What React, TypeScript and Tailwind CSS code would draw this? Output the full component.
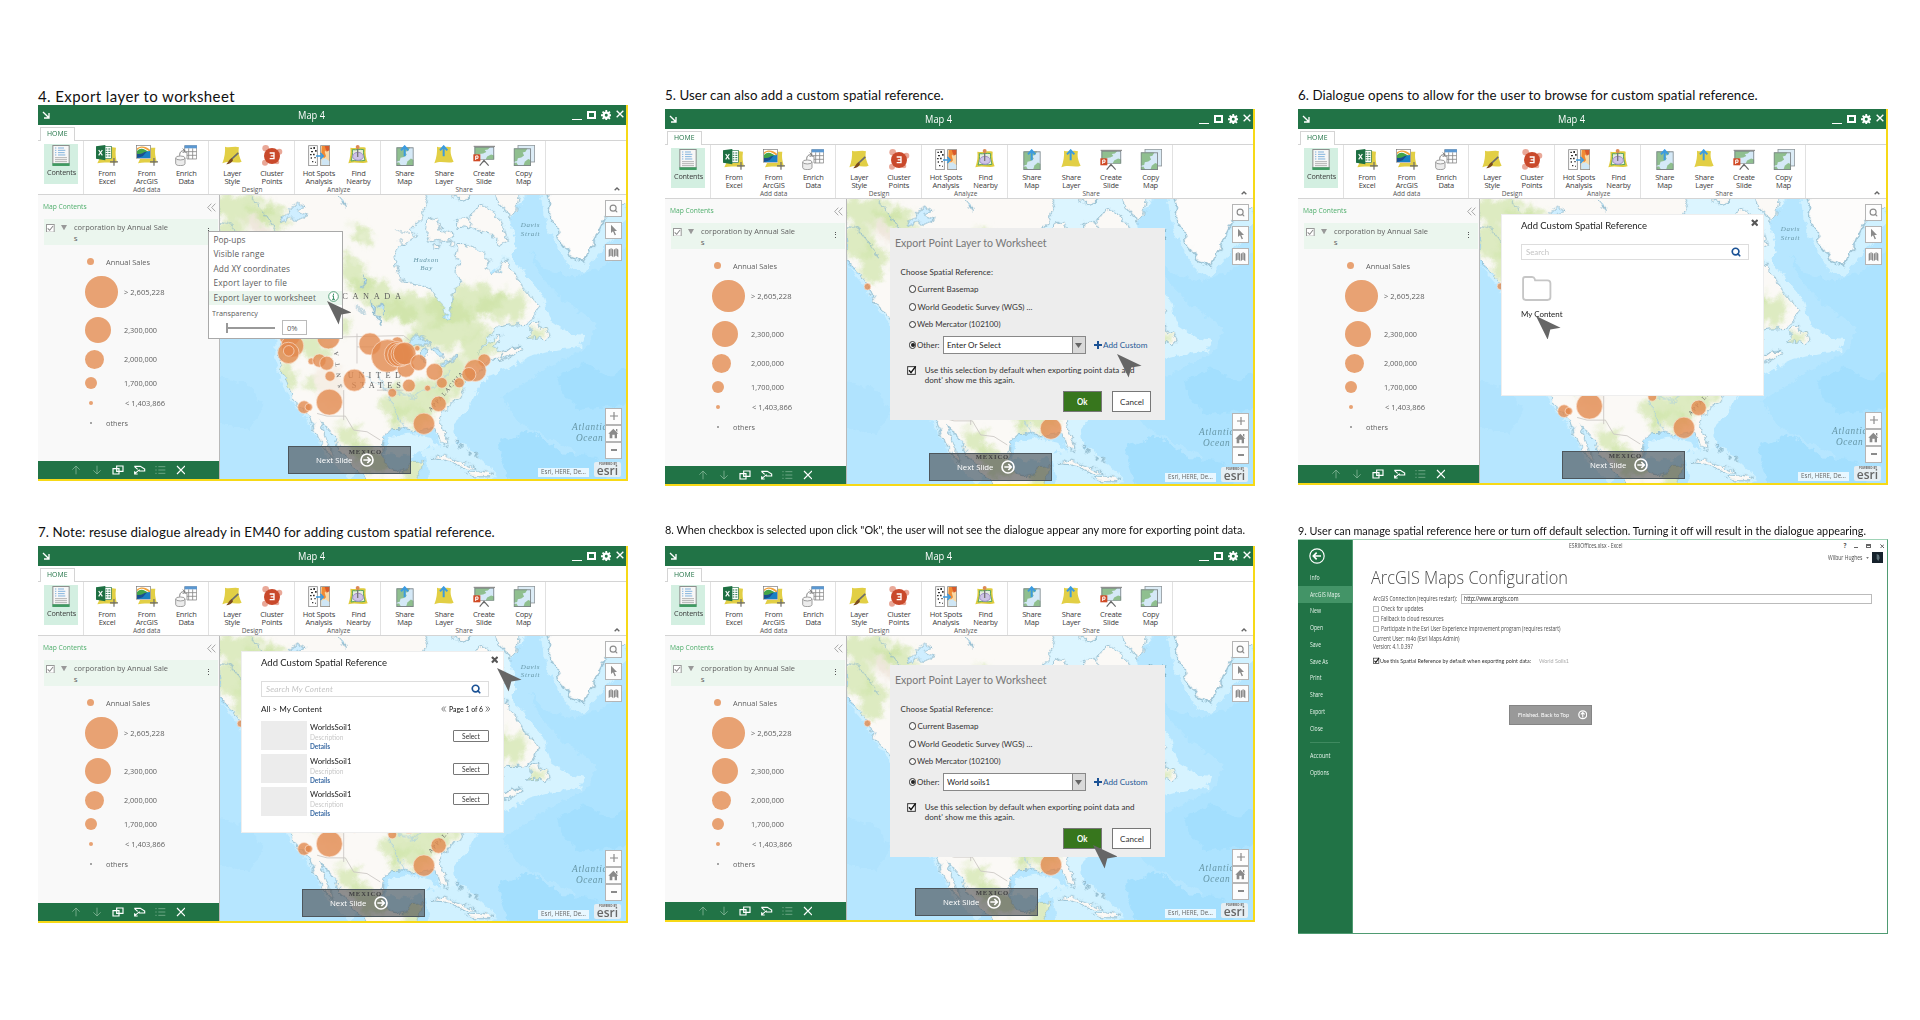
import React, { useLayoutEffect, useRef, useState } from "react";
import { Search } from "lucide-react";

const UI = "font-['Open_Sans','Noto_Sans',sans-serif]";
const HUMAN = "font-['Lato','Open_Sans',sans-serif]";

/* Text that fills a known width: narrowed when it is too long, spaced out when it is too short. */
function T({ w, className = "", children }: { w?: number; className?: string; children: string }) {
  const ref = useRef<HTMLSpanElement>(null);
  const [fit, setFit] = useState<React.CSSProperties>({});
  useLayoutEffect(() => {
    if (!w || !ref.current) return;
    const natural = ref.current.getBoundingClientRect().width;
    if (natural > w) {
      setFit({ transform: `scaleX(${w / natural})`, transformOrigin: "0 50%", marginRight: w - natural });
    } else {
      setFit({ letterSpacing: (w - natural) / children.length });
    }
  }, []);
  return (
    <span ref={ref} className={`inline-block shrink-0 self-auto whitespace-nowrap ${className}`} style={fit}>
      {children}
    </span>
  );
}

/* ---------------------------------------------------------------- icons */

const YELLOW = "M12 5C26 11 40 1 54 7C50 24 57 40 62 50C46 57 24 46 4 55C11 38 13 20 12 5Z";

function Land({ x, y, w, h }: { x: number; y: number; w: number; h: number }) {
  return (
    <svg x={x} y={y} width={w} height={h} viewBox="0 0 50 50" preserveAspectRatio="none">
      <rect width="50" height="50" fill="#d5e9f7" />
      <path d="M0 0H40L34 10L26 12L30 20L22 26L12 28L10 36L0 38Z" fill="#8fbf8f" />
      <path d="M28 50L32 38L42 30L50 34V50Z" fill="#8fbf8f" />
      <path d="M0 42L8 40L14 50H0Z" fill="#8fbf8f" />
      <rect x="1" y="1" width="48" height="48" fill="none" stroke="#7d8487" strokeWidth="3" />
    </svg>
  );
}

function Plus() {
  return <path d="M54 39V62M42 50.500H66" stroke="#6b6b6b" strokeWidth="3.500" fill="none" />;
}

const UpArrow = () => (
  <path d="M32 34V5M21 16L32 4L43 16" stroke="#3b9be0" strokeWidth="6" fill="none" />
);

const ICONS: Record<string, React.ReactNode> = {
  contents: (
    <>
      <rect x="8.500" y="1.500" width="49" height="55" fill="#f7f7f7" stroke="#8b8f8d" strokeWidth="3" />
      <rect x="7" y="55" width="52" height="8" fill="#3f9a62" />
      <path d="M24 9H42M24 16H46M24 23H44M24 30H46M15 9H19M15 16H19M15 23H19M15 30H19" stroke="#6aa6d8" strokeWidth="2.500" />
      <path d="M15 38H51M15 44H51M15 50H51" stroke="#a5a5a5" strokeWidth="2.500" />
    </>
  ),
  excel: (
    <>
      <path d="M44 6L60 8C57 26 60 42 63 52C48 56 26 50 4 55L10 42H44Z" fill="#e2cf45" />
      <rect x="22" y="5" width="24" height="36" fill="#fff" stroke="#217346" strokeWidth="2" />
      <path d="M29 12H34M37 12H43M29 19H34M37 19H43M29 26H34M37 26H43M29 33H34M37 33H43" stroke="#217346" strokeWidth="3" />
      <path d="M0 4L28 0V46L0 41Z" fill="#1d6f42" />
      <path d="M8 15L19 31M19 15L8 31" stroke="#fff" strokeWidth="3.500" />
      <Plus />
    </>
  ),
  arcgis: (
    <>
      <path d="M44 8L58 8C55 26 60 42 63 52C48 56 26 50 6 55L12 42H44Z" fill="#e2cf45" />
      <rect x="1.500" y="1.500" width="42" height="38" fill="#fff" stroke="#777" strokeWidth="2" />
      <path d="M3 16C14 3 26 8 42 22V14C28 2 14 2 3 10Z" fill="#f2a33c" />
      <path d="M3 18C14 6 26 12 42 24V34H3Z" fill="#44a548" />
      <path d="M3 32C18 32 26 18 42 18V39H3Z" fill="#1a7fc4" />
      <path d="M3 26C16 30 22 20 32 20L20 34L3 39Z" fill="#1b4f8f" />
      <Plus />
    </>
  ),
  enrich: (
    <>
      <path d="M29 2H65V42H36V22H29Z" fill="#fff" stroke="#8a8a8a" strokeWidth="2.500" />
      <rect x="29" y="1" width="37" height="9" fill="#5b98d2" />
      <path d="M29 20H65M36 31H65M41 10V42M53 10V42" stroke="#8a8a8a" strokeWidth="2.500" />
      <path d="M2 39V56C2 64 30 64 30 56V39" fill="#ececec" stroke="#8a8a8a" strokeWidth="2.500" />
      <ellipse cx="16" cy="39" rx="14" ry="6" fill="#f6f6f6" stroke="#8a8a8a" strokeWidth="2.500" />
      <path d="M14 32C14 20 19 17 29 17M23 11L30 17L23 24" fill="none" stroke="#777" strokeWidth="3" />
    </>
  ),
  style: (
    <>
      <path d={YELLOW} fill="#e2cf45" />
      <path d="M52 24L30 44" stroke="#6c6c6c" strokeWidth="5" />
      <path d="M33 40L36 46C32 54 24 58 15 58C22 54 24 42 33 40Z" fill="#7a4a20" />
    </>
  ),
  cluster: (
    <>
      <circle cx="14" cy="10" r="10" fill="#e9a898" />
      <circle cx="55" cy="20" r="9" fill="#e9a898" />
      <circle cx="12" cy="53" r="9" fill="#e9a898" />
      <circle cx="48" cy="51" r="7" fill="#e9a898" />
      <circle cx="33" cy="33" r="24" fill="#c9492b" />
      <path d="M26 24H39V41H26M29 32.500H39" fill="none" stroke="#fff" strokeWidth="4" />
    </>
  ),
  hot: (
    <>
      <rect x="2" y="2" width="26" height="60" fill="#fff" stroke="#8a8a8a" strokeWidth="2.500" />
      <path d="M7 8h5v4h-5zM16 6h5v6h-5zM21 15h5v5h-5zM9 18h6v4h-6zM6 27h5v4h-5zM15 26h5v5h-5zM8 37h4v4h-4zM19 36h4v4h-4zM12 48h4v4h-4zM21 50h3v3h-3z" fill="#333" />
      <rect x="38" y="2" width="27" height="60" fill="#f9d9a5" stroke="#8a8a8a" strokeWidth="2.500" />
      <path d="M42 3H60L56 14L50 20L54 34L48 40L40 30Z" fill="#f08b35" />
      <path d="M50 3H64V16L56 20Z" fill="#d95a2b" />
      <path d="M40 44L52 40L64 48V60H40Z" fill="#cfe6f5" />
      <path d="M24 33H44M37 24L46 33L37 42" fill="none" stroke="#3b9be0" strokeWidth="4.500" />
    </>
  ),
  nearby: (
    <>
      <path d="M10 8C28 12 40 4 56 8C54 26 58 42 62 52C44 58 24 48 4 55C10 38 12 20 10 8Z" fill="#dfcc3d" />
      <path d="M16 14C30 16 38 11 50 14C48 27 52 38 54 46C42 50 26 44 12 48C16 36 17 26 16 14Z" fill="#e4eddb" stroke="#58a55c" strokeWidth="3" />
      <ellipse cx="33" cy="34" rx="16" ry="12" fill="#cdc3e6" stroke="#9684c4" strokeWidth="2.500" />
      <path d="M32 10V36" stroke="#777" strokeWidth="4" />
      <circle cx="32" cy="6" r="6" fill="#dc8a55" />
    </>
  ),
  sharemap: (
    <>
      <Land x={7} y={7} w={52} h={56} />
      <UpArrow />
    </>
  ),
  sharelayer: (
    <>
      <path d={YELLOW} fill="#e2cf45" />
      <UpArrow />
    </>
  ),
  slide: (
    <>
      <Land x={4} y={6} w={60} h={38} />
      <path d="M2 4H66" stroke="#777" strokeWidth="3" />
      <path d="M33 44V52M33 46L20 62M33 46L47 62" stroke="#666" strokeWidth="3.500" fill="none" />
      <rect x="1" y="28" width="21" height="21" fill="#d04a25" />
      <path d="M8 45V33H15V40H8" fill="none" stroke="#fff" strokeWidth="3" />
    </>
  ),
  copy: (
    <>
      <rect x="15" y="1" width="50" height="50" fill="#dcecf6" stroke="#8d9497" strokeWidth="2.500" />
      <Land x={2} y={10} w={52} h={53} />
    </>
  ),
};

function Icon({ name }: { name: string }) {
  return (
    <svg viewBox="0 0 66 64" className="block h-[21.300px] w-[22px]">
      {ICONS[name]}
    </svg>
  );
}

function Gear({ className }: { className: string }) {
  return (
    <svg viewBox="0 0 32 32" className={className}>
      <path d="M16 0V32M0 16H32M4.700 4.700L27.300 27.300M27.300 4.700L4.700 27.300" stroke="#fff" strokeWidth="5.500" />
      <circle cx="16" cy="16" r="7.800" fill="#217346" stroke="#fff" strokeWidth="6.500" />
    </svg>
  );
}

function Cursor() {
  return (
    <svg viewBox="0 0 74 71" className="block h-[23.600px] w-[24.600px]">
      <path d="M0 0L74 35L43 41L35 71Z" fill="#666" />
    </svg>
  );
}

/* ------------------------------------------------------------------ map */

const MAINLAND =
  "M20 0H300L420 0H640L655 35L640 62L628 92L602 112L622 140L592 152L566 170L551 200L560 240L580 275L622 282L668 300L682 330L700 350L706 380L722 385L726 340L730 310L752 275L735 240L750 220L735 200L742 165L772 165L812 182L836 210L828 232L842 256L866 240L884 205L905 240L925 268L945 300L972 332L986 350L962 392L950 402L900 404L862 410L832 448L802 488L830 462L872 428L868 446L850 470L870 484L930 464L905 486L868 508L842 506L830 520L800 548L770 562L752 582L763 606L750 626L725 640L700 670L688 695L702 724L713 756L708 772L695 760L684 735L672 712L640 716L612 728L602 718L576 713L545 716L521 740L515 775L520 815L540 838L566 844L590 838L602 815L637 812L630 850L612 880H480L458 856L430 830L400 792L372 746L340 702L326 692L338 724L352 762L368 802L352 786L334 758L316 724L301 684L280 664L258 640L240 604L222 562L210 520L206 480L214 446L200 420L160 376L136 345L112 318L98 290L83 258L55 222L28 200Z";

const ISLANDS = [
  "M790 60L820 45L850 60L880 110L895 150L870 165L840 130L800 120L770 95Z",
  "M735 90L760 78L790 95L780 115L745 110Z",
  "M655 90L680 80L690 115L730 130L715 155L680 150L655 155L645 120Z",
  "M850 0H930L920 60L900 85L880 50L860 40Z",
  "M720 0H800L780 20L740 28Z",
  "M670 160L690 158L685 175L668 172Z",
  "M722 150L736 160L728 170L718 164Z",
  "M965 400L985 388L990 410L1010 415L1020 440L1005 455L985 440L950 445L962 420Z",
  "M880 486L905 470L935 472L920 490L880 508Z",
  "M660 805L700 795L750 812L800 835L770 838L730 818L690 808Z",
  "M770 848L810 842L850 850L840 860L790 860Z",
];

const GREENLAND =
  "M1008 0L1022 40L1015 70L1040 110L1045 140L1068 170L1080 200L1105 208L1118 216L1130 195L1145 172L1165 120L1180 90L1215 50L1260 30V0Z";

const GREENS: [number, number, number, number, number][] = [
  [90, 50, 100, 45, 10], [180, 80, 60, 35, 30], [60, 140, 50, 50, 30], [110, 200, 40, 60, 0],
  [440, 250, 70, 30, 50], [520, 330, 110, 40, 30], [650, 360, 130, 50, 5], [760, 340, 110, 50, -10],
  [880, 350, 80, 45, -10], [700, 430, 120, 40, -10], [800, 470, 60, 40, -30], [450, 130, 40, 16, 40],
  [230, 520, 20, 70, -10], [290, 470, 70, 30, 20], [330, 400, 90, 40, 10], [720, 560, 60, 40, -40],
  [660, 620, 70, 50, -10], [600, 680, 60, 35, 0], [420, 740, 50, 30, 50], [320, 570, 40, 30, 20],
  [470, 800, 60, 40, 30], [560, 640, 40, 50, 10], [620, 850, 40, 40, 0], [985, 425, 30, 25, 0],
];

const BUBBLES: [number, number, number][] = [
  [90, 276, 10], [238, 438, 31], [354, 442, 34], [246, 467, 34], [234, 488, 32], [235, 482, 16],
  [303, 513, 10], [327, 511, 20], [349, 519, 21], [359, 558, 15], [432, 570, 33], [357, 636, 39],
  [281, 651, 19], [295, 651, 11], [479, 461, 33], [561, 457, 17], [532, 497, 49], [587, 535, 26],
  [560, 492, 38], [568, 494, 36], [576, 492, 34], [583, 490, 34], [625, 517, 24], [621, 474, 8],
  [673, 545, 25], [596, 586, 19], [546, 608, 13], [652, 594, 9], [695, 578, 16], [747, 578, 15],
  [822, 510, 19], [795, 541, 33], [776, 553, 21], [685, 641, 23], [641, 701, 32],
];

function MapArt({ id }: { id: string }) {
  return (
    <svg viewBox="28.500 13.500 1221 855" preserveAspectRatio="none" className="block h-full w-full">
      <defs>
        <filter id={`${id}-rough`} x="-5%" y="-5%" width="110%" height="110%">
          <feTurbulence type="fractalNoise" baseFrequency="0.045" numOctaves="3" seed="7" result="n" />
          <feDisplacementMap in="SourceGraphic" in2="n" scale="26" xChannelSelector="R" yChannelSelector="G" />
        </filter>
        <filter id={`${id}-soft`} x="-30%" y="-30%" width="160%" height="160%">
          <feTurbulence type="fractalNoise" baseFrequency="0.03" numOctaves="4" seed="3" result="n" />
          <feDisplacementMap in="SourceGraphic" in2="n" scale="70" xChannelSelector="R" yChannelSelector="G" />
          <feGaussianBlur stdDeviation="7" />
        </filter>
        <clipPath id={`${id}-land`}>
          <path d={MAINLAND} />
          {ISLANDS.slice(7).map((d) => (
            <path key={d} d={d} />
          ))}
        </clipPath>
      </defs>
      <rect x="0" y="0" width="1300" height="900" fill="#b6e6ff" />
      <g filter={`url(#${id}-rough)`}>
        <path d="M960 180L1010 240L1090 260L1180 230L1270 150V900H1150L1090 780L930 700L870 620L1000 540L1130 470L1160 400L1060 330L990 260Z" fill="#ade3ff" />
        <path d="M1040 560L1120 520L1200 560L1270 520V640L1120 660L1060 620Z" fill="#a3dffe" />
        <path d="M860 760L960 720L1060 790L1160 800L1200 880H900Z" fill="#a3dffe" />
        <path d="M20 560L110 580L160 640L120 720L20 700Z" fill="#b0e3fe" />
        <path d="M500 -10H960L900 90L920 170L900 205L820 260L740 400L640 320L560 280L520 160Z" fill="#dcf5ff" />
        <path d="M880 190L930 230L1000 320L1020 390L1080 430L1125 440L1110 470L1030 480L960 500L880 540L830 560L800 600L770 660L730 700L740 780L700 800L660 740L600 730L540 740L520 790L600 800L660 770L700 800L640 600L800 400Z" fill="#d6f3ff" />
        <path d="M990 0L1000 70L1030 150L1070 220L1120 245L1170 190L1250 90V0Z" fill="#d0f1ff" />
        <path d="M640 780L760 760L860 850L840 880H660Z" fill="#d0f1ff" />
        <path d="M28 210L80 270L140 370L195 430L195 520L230 620L300 700L350 800L420 870L440 830L300 600L200 350Z" fill="#cdefff" />
      </g>
      <g filter={`url(#${id}-rough)`}>
        <path d={MAINLAND} fill="#fbf9f6" stroke="#93bccf" strokeWidth="3" />
        {ISLANDS.map((d) => (
          <path key={d} d={d} fill="#fbf9f6" stroke="#93bccf" strokeWidth="3" />
        ))}
        <path d={GREENLAND} fill="#fdfcfb" stroke="#93bccf" strokeWidth="4" />
        <g clipPath={`url(#${id}-land)`}>
          <g filter={`url(#${id}-soft)`}>
            {GREENS.map(([x, y, rx, ry, a]) => (
              <ellipse key={`${x}-${y}`} cx={x} cy={y} rx={rx} ry={ry} transform={`rotate(${a} ${x} ${y})`} fill="#c9e2a0" opacity="0.620" />
            ))}
            <ellipse cx="150" cy="120" rx="60" ry="14" fill="#efe6dc" transform="rotate(40 150 120)" />
            <ellipse cx="360" cy="580" rx="40" ry="70" fill="#f6efe6" />
          </g>
        </g>
        <path d="M100 0C140 40 170 70 190 110C205 140 260 160 300 180M28 95C70 90 80 140 130 190" fill="none" stroke="#8db8cc" strokeWidth="3" />
        <path d="M205 80L235 70L240 55L262 38L285 48L262 62L280 75L292 70L280 88L240 84L215 92Z" fill="#cfeeff" stroke="#8db8cc" strokeWidth="3" />
        <path d="M380 15L408 50L400 30M455 285L462 258L468 275L456 290M482 335L498 345L495 375L510 380L515 405L500 385ZM505 340L520 352L518 372" fill="#bfe6fa" stroke="#93bccf" strokeWidth="4" />
        <path d="M560 122L600 128M560 150L590 158M440 350L470 370" stroke="#93bccf" strokeWidth="3" />
        <path d="M590 465L620 434L650 448L662 462L640 465L615 462ZM632 475L646 472L650 500L640 520L630 500ZM662 470L690 478L700 500L684 502L668 486ZM688 520L715 508L712 520L692 528ZM718 504L742 500L740 508L720 511Z" fill="#c3eafd" stroke="#8fb8cc" strokeWidth="3" />
        <path d="M500 545C530 600 540 640 590 720M460 560C540 610 580 600 610 625C640 600 700 570 720 545" fill="none" stroke="#a9cfe0" strokeWidth="3" />
        <path d="M735 745L742 762M748 765L760 775M770 782L778 795M790 790L800 800" stroke="#93bccf" strokeWidth="5" />
      </g>
      <g fill="none" stroke="#c9c5c2" strokeWidth="2.500">
        <path d="M212 440L400 440L580 436L600 452M320 670L350 678L405 678L430 720L470 725L510 750M440 430V520M400 600V690M500 470H440M580 600H500" />
      </g>
      <g className="font-['Liberation_Serif',serif]" fill="#5f5f5f" fontSize="25">
        <text x="396" y="326" textLength="176">CANADA</text>
        <text x="412" y="563" textLength="160">UNITED</text>
        <text x="424" y="593" textLength="148">STATES</text>
        <text x="415" y="792" fontSize="20" textLength="98" fontWeight="bold" fill="#3f3f3f">MEXICO</text>
        <text x="0" y="0" fontSize="18" transform="translate(662 665) rotate(-49)" textLength="150">APPALACHIA</text>
        <text x="0" y="0" fontSize="19" transform="translate(396 592) rotate(-97)" textLength="110">S N T A</text>
      </g>
      <g className="font-['Liberation_Serif',serif]" fontStyle="italic" fill="#6797a7" fontSize="21">
        <text x="610" y="214" textLength="74">Hudson</text>
        <text x="630" y="240" textLength="36">Bay</text>
        <text x="932" y="111" textLength="56">Davis</text>
        <text x="932" y="136" textLength="56">Strait</text>
        <text x="1086" y="719" fontSize="28" textLength="104">Atlantic</text>
        <text x="1098" y="752" fontSize="28" textLength="80">Ocean</text>
      </g>
      {BUBBLES.map(([x, y, r], i) => (
        <circle key={i} cx={x} cy={y} r={r} fill="#e2894f" fillOpacity="0.800" stroke="#fbe3d2" strokeWidth="2" />
      ))}
    </svg>
  );
}

function MapButton({ children }: { children: React.ReactNode }) {
  return (
    <div className="flex h-[17px] w-[17px] items-center justify-center border border-[#b5b5b5] bg-[#fdfdfd]">{children}</div>
  );
}

function NextSlide({ className }: { className: string }) {
  return (
    <div className={`absolute z-10 flex h-[28px] w-[123px] items-center gap-[7.500px] border border-[#4d565c] bg-[#3f4044]/58 pl-[26.700px] text-[8px] text-white ${UI} ${className}`}>
      <T w={36.500} className="font-medium">Next Slide</T>
      <svg viewBox="0 0 42 42" className="h-[14px] w-[14px]">
        <circle cx="21" cy="21" r="18" fill="none" stroke="#fff" strokeWidth="5" />
        <path d="M10 21H30M22 12L31 21L22 30" fill="none" stroke="#fff" strokeWidth="5" />
      </svg>
    </div>
  );
}

/* --------------------------------------------------------------- ribbon */

type Item = { icon: string; a: string; b?: string };

const GROUPS: { label: string; cls: string; items: Item[] }[] = [
  {
    label: "Add data",
    cls: "w-[124.700px] pl-[1px]",
    items: [
      { icon: "excel", a: "From", b: "Excel" },
      { icon: "arcgis", a: "From", b: "ArcGIS" },
      { icon: "enrich", a: "Enrich", b: "Data" },
    ],
  },
  { label: "Design", cls: "w-[85.700px] pl-[1.500px]", items: [{ icon: "style", a: "Layer", b: "Style" }, { icon: "cluster", a: "Cluster", b: "Points" }] },
  { label: "Analyze", cls: "w-[86px] pl-[3px]", items: [{ icon: "hot", a: "Hot Spots", b: "Analysis" }, { icon: "nearby", a: "Find", b: "Nearby" }] },
  {
    label: "Share",
    cls: "w-[165px] pl-[3px]",
    items: [
      { icon: "sharemap", a: "Share", b: "Map" },
      { icon: "sharelayer", a: "Share", b: "Layer" },
      { icon: "slide", a: "Create", b: "Slide" },
      { icon: "copy", a: "Copy", b: "Map" },
    ],
  },
];

function Ribbon() {
  return (
    <div className="flex h-[53.500px] shrink-0 border-b border-[#d4d4d4] bg-white text-[7.500px] leading-[8px] tracking-[-0.200px] text-[#3c3c3c]">
      <div className="w-[46.300px] shrink-0 border-r border-[#e1e1e1] pt-[3px] pl-[6px]">
        <div className="flex h-[39.500px] w-[34px] flex-col items-center bg-[#d3efe1] pt-[1px]">
          <Icon name="contents" />
          <T w={29} className="mt-[2px]">Contents</T>
        </div>
      </div>
      {GROUPS.map((g) => (
        <div key={g.label} className={`flex shrink-0 flex-col items-center border-r border-[#e1e1e1] pt-[4px] ${g.cls}`}>
          <div className="flex h-[40.500px]">
            {g.items.map((it) => (
              <div key={it.icon} className="flex w-[39.600px] flex-col items-center whitespace-nowrap">
                <Icon name={it.icon} />
                <span className="mt-[2.300px]">{it.a}</span>
                <span>{it.b}</span>
              </div>
            ))}
          </div>
          <span className="text-[6.500px] tracking-normal text-[#555]">{g.label}</span>
        </div>
      ))}
      <div className="flex flex-1 items-end justify-end pr-[6.500px] pb-[3px]">
        <svg viewBox="0 0 18 12" className="h-[4px] w-[6px]">
          <path d="M2 10L9 3L16 10" fill="none" stroke="#666" strokeWidth="4" />
        </svg>
      </div>
    </div>
  );
}

/* -------------------------------------------------------------- sidebar */

const LEGEND: { text: string; row: string; dot: string; gap: string; w: number }[] = [
  { text: "Annual Sales", row: "h-[17.400px] mt-[8.300px]", dot: "ml-[2px] size-[7.400px]", gap: "pl-[11.600px]", w: 44 },
  { text: "> 2,605,228", row: "h-[43.600px]", dot: "size-[32.600px]", gap: "pl-[6.600px]", w: 40.500 },
  { text: "2,300,000", row: "h-[32px]", dot: "size-[25.600px]", gap: "pl-[13.400px]", w: 33 },
  { text: "2,000,000", row: "h-[27px]", dot: "size-[19px]", gap: "pl-[20px]", w: 33 },
  { text: "1,700,000", row: "h-[20px]", dot: "size-[12px]", gap: "pl-[27px]", w: 33 },
  { text: "< 1,403,866", row: "h-[20px]", dot: "ml-[3.700px] size-[4.600px]", gap: "pl-[31.400px]", w: 40 },
  { text: "others", row: "h-[20px]", dot: "ml-[5px] size-[2px] bg-[#888]", gap: "pl-[14px]", w: 22 },
];

function Sidebar() {
  return (
    <div className="flex w-[181.500px] shrink-0 flex-col border-r border-[#b9b9b9] bg-[#f9f9f9] text-[8px] text-[#5f5f5f]">
      <div className="flex h-[24.500px] items-center justify-between pr-[3px] pl-[5px] text-[7.500px] text-[#4fae6c]">
        <T w={43.700}>Map Contents</T>
        <svg viewBox="0 0 27 27" className="mt-[1px] h-[9px] w-[9px]">
          <path d="M13 2L2 13.500L13 25M25 2L14 13.500L25 25" fill="none" stroke="#999" strokeWidth="2.500" />
        </svg>
      </div>
      <div className="ml-[5.500px] flex h-[25.700px] w-[174px] bg-[#ebf6ee] pt-[4.600px] pl-[2.500px]">
        <svg viewBox="0 0 26 26" className="h-[8.700px] w-[8.700px] shrink-0">
          <rect x="1.500" y="1.500" width="23" height="23" fill="#fff" stroke="#999" strokeWidth="3" />
          <path d="M5 13L11 19L21 6" fill="none" stroke="#888" strokeWidth="3" />
        </svg>
        <svg viewBox="0 0 18 16" className="mt-[1px] ml-[6.300px] h-[5.300px] w-[6px] shrink-0">
          <path d="M0 0H18L9 16Z" fill="#999" />
        </svg>
        <div className="mt-[-1.500px] ml-[6.700px] flex h-[20px] w-[94px] shrink-0 flex-col items-start text-[8px] leading-[10.800px]">
          <T w={94}>corporation by Annual Sale</T>
          <span>s</span>
        </div>
        <div className="mt-[4px] ml-[40px] flex flex-col gap-[1.500px]">
          <i className="block size-[1.200px] bg-[#555]" />
          <i className="block size-[1.200px] bg-[#555]" />
          <i className="block size-[1.200px] bg-[#555]" />
        </div>
      </div>
      <div className="flex flex-1 flex-col pl-[47px]">
        {LEGEND.map((l) => (
          <div key={l.text} className={`flex items-center ${l.row}`}>
            <span className={`shrink-0 rounded-full ${l.text === "others" ? "" : "bg-[#e8a273]"} ${l.dot}`} />
            <span className={`flex ${l.gap}`}>
              <T w={l.w}>{l.text}</T>
            </span>
          </div>
        ))}
      </div>
      <div className="flex h-[18.500px] shrink-0 items-center bg-[#217346] pl-[32.500px]">
        <svg viewBox="0 0 342 36" className="h-[12px] w-[114px]" fill="none" stroke="#fff" strokeWidth="2.500">
          <path d="M15 31V6M4 17L15 6L26 17M78 5V30M67 19L78 30L89 19" stroke="#7fb394" />
          <path d="M126 14H144V30H126ZM137 6H156V22H137Z" strokeWidth="3.500" />
          <path d="M190 7H208L221 15V21H204M190 7L200 16M191 29L206 17M191 22V30H200" strokeWidth="3.500" />
          <path d="M253 8H257M262 8H283M253 18H257M262 18H283M253 28H257M262 28H283" stroke="#6ba583" strokeWidth="3" />
          <path d="M318 6L342 30M342 6L318 30" strokeWidth="3.500" />
        </svg>
      </div>
    </div>
  );
}

/* --------------------------------------------------------------- window */

function MapWindow({ id, next, height = "h-[376px]", children }: { id: string; next: string; height?: string; children?: React.ReactNode }) {
  return (
    <div className={`relative flex w-[590px] shrink-0 flex-col border-r-[2px] border-b-[2px] border-[#f7d916] ${height} ${UI}`}>
      <div className="flex h-[20px] shrink-0 items-center bg-[#217346] text-white">
        <svg viewBox="0 0 24 24" className="ml-[4px] h-[8px] w-[8px]">
          <path d="M3 3L19 19M21 6V21H6" fill="none" stroke="#fff" strokeWidth="4" />
        </svg>
        <div className="flex flex-1 justify-center text-[10px]">
          <T w={27}>Map 4</T>
        </div>
        <div className="flex h-[10px] items-center gap-[5px] pr-[2px]">
          <i className="mt-[9px] block h-[1.500px] w-[9.500px] bg-white" />
          <i className="block h-[8.500px] w-[9px] border-2 border-white" />
          <Gear className="h-[10.500px] w-[10.500px]" />
          <svg viewBox="0 0 24 24" className="mt-[-2px] h-[8px] w-[8px]">
            <path d="M2 2L22 22M22 2L2 22" stroke="#fff" strokeWidth="4" />
          </svg>
        </div>
      </div>
      <div className="flex h-[16px] shrink-0 items-end border-b border-[#d4d4d4] bg-white pl-[1.500px]">
        <div className="mb-[-1px] flex h-[14px] w-[35px] items-center justify-center border border-b-0 border-[#d4d4d4] bg-white text-[7px] text-[#217346]">
          <T w={20.500}>HOME</T>
        </div>
      </div>
      <Ribbon />
      <div className="flex min-h-0 flex-1">
        <Sidebar />
        <div className="relative min-w-0 flex-1 overflow-hidden">
          <MapArt id={id} />
          <div className="absolute top-[5.500px] right-[4px] flex flex-col gap-[4.800px]">
            <MapButton>
              <Search className="h-[9px] w-[9px] text-[#8a8a8a]" strokeWidth={3} />
            </MapButton>
            <MapButton>
              <svg viewBox="0 0 24 36" className="h-[12px] w-[8px]">
                <path d="M3 2V27L9 22L14 34L18 32L13 21H21Z" fill="#8a8a8a" />
              </svg>
            </MapButton>
            <MapButton>
              <svg viewBox="0 0 33 33" className="h-[11px] w-[11px]">
                <path d="M2 8L8 4V26L2 30ZM10 3L16 8V31L10 26ZM18 8L23 4V26L18 30ZM25 3L31 8V31L25 26Z" fill="#8a8a8a" />
              </svg>
            </MapButton>
          </div>
          <div className="absolute right-[4px] bottom-[20.500px] flex flex-col">
            <MapButton>
              <svg viewBox="0 0 24 24" className="h-[8px] w-[8px]">
                <path d="M12 0V24M0 12H24" stroke="#8a8a8a" strokeWidth="3.500" />
              </svg>
            </MapButton>
            <MapButton>
              <svg viewBox="0 0 33 33" className="h-[11px] w-[11px]">
                <path d="M16 2L31 17H27V31H20V20H13V31H5V17H1ZM24 3H28V12L24 8Z" fill="#8a8a8a" />
              </svg>
            </MapButton>
            <MapButton>
              <i className="block h-[1.200px] w-[6px] bg-[#8a8a8a]" />
            </MapButton>
          </div>
          <div className="absolute right-[37px] bottom-[2px] flex h-[9.500px] w-[51px] items-center justify-center bg-white/75 text-[6.500px] text-[#666]">
            <T w={45}>Esri, HERE, De...</T>
          </div>
          <div className="absolute right-[5px] bottom-[2px] flex h-[15.500px] w-[27px] flex-col items-center rounded-[2px] bg-[#f1f1f1]/85 pt-[1px] text-[#666]">
            <T w={18} className="text-[3px] leading-[3px] font-bold">POWERED BY</T>
            <T w={21.500} className="text-[12px] leading-[9px] font-semibold">esri</T>
          </div>
        </div>
      </div>
      <NextSlide className={next} />
      {children}
    </div>
  );
}

/* -------------------------------------------------------------- dialogs */

function ContextMenu() {
  const rows = [
    { t: "Pop-ups", w: 32 },
    { t: "Visible range", w: 51 },
    { t: "Add XY coordinates", w: 76.500 },
    { t: "Export layer to file", w: 73.500 },
  ];
  return (
    <div className="absolute top-[126px] left-[170px] h-[108px] w-[134.500px] border border-[#a9a9a9] bg-white pt-[1px] text-[8.300px] font-medium text-[#5c5c5c]">
      {rows.map((r) => (
        <div key={r.t} className="flex h-[14.400px] items-center pl-[4.500px]">
          <T w={r.w}>{r.t}</T>
        </div>
      ))}
      <div className="flex h-[14.600px] items-center bg-[#ebf6ee] pl-[4.500px]">
        <T w={102.500}>Export layer to worksheet</T>
        <svg viewBox="0 0 33 33" className="mt-[-3px] ml-[11.500px] h-[11px] w-[11px]">
          <circle cx="16.500" cy="16.500" r="14.500" fill="#fff" stroke="#3f9168" strokeWidth="2.500" />
          <path d="M16.500 8V12M16.500 14V25M12 25H21M13 15H17" stroke="#3f9168" strokeWidth="3" />
        </svg>
      </div>
      <div className="flex h-[16px] items-center pl-[3.200px] text-[7.500px]">
        <T w={46}>Transparency</T>
      </div>
      <div className="mt-[-0.700px] flex items-center pl-[16.700px]">
        <i className="block h-[10px] w-[2.500px] bg-[#999]" />
        <i className="block h-[1.500px] w-[47px] bg-[#999]" />
        <div className="ml-[6.500px] flex h-[15px] w-[25.500px] items-center border border-[#bbb] pl-[4px] text-[8px]">
          <T w={10.500}>0%</T>
        </div>
      </div>
    </div>
  );
}

function Radio({ on }: { on?: boolean }) {
  return (
    <span className="flex size-[7.800px] shrink-0 items-center justify-center rounded-full border border-[#333] bg-white/60">
      {on && <i className="block size-[4px] rounded-full bg-[#222]" />}
    </span>
  );
}

function Tick({ className }: { className: string }) {
  return (
    <svg viewBox="0 0 30 30" className={`shrink-0 ${className}`}>
      <rect x="2" y="5" width="23" height="23" fill="#fff" stroke="#333" strokeWidth="3" />
      <path d="M6 16L12 23L26 4" fill="none" stroke="#111" strokeWidth="4.500" />
    </svg>
  );
}

function ExportDialog({ value, vw }: { value: string; vw: number }) {
  return (
    <div className={`absolute top-[119px] left-[225.400px] h-[192px] w-[275px] bg-[#ededed] text-[8px] leading-[10px] text-[#333] ${HUMAN}`}>
      <div className="flex h-[30px] items-center pl-[4.500px] text-[11.300px] text-[#777]">
        <T w={151.500}>Export Point Layer to Worksheet</T>
      </div>
      <div className="mt-[9px] flex h-[10px] items-center pl-[10.200px]">
        <T w={92.500}>Choose Spatial Reference:</T>
      </div>
      <div className="mt-[3px] flex h-[17.800px] items-center gap-[1px] pl-[18.300px]">
        <Radio />
        <T w={61}>Current Basemap</T>
      </div>
      <div className="flex h-[17.800px] items-center gap-[1px] pl-[18.300px]">
        <Radio />
        <T w={115}>World Geodetic Survey (WGS) ...</T>
      </div>
      <div className="flex h-[17.800px] items-center gap-[1px] pl-[18.300px]">
        <Radio />
        <T w={83.500}>Web Mercator (102100)</T>
      </div>
      <div className="mt-[3px] flex h-[17.500px] items-center pl-[18.300px]">
        <Radio on />
        <T w={22.500} className="ml-[1px]">Other:</T>
        <div className="ml-[3.500px] flex h-full w-[142.500px] items-center justify-between border border-[#888] bg-white pl-[2.500px] text-[#222]">
          <T w={vw}>{value}</T>
          <span className="flex h-full w-[13px] items-center justify-center border-l border-[#888] bg-[#d9d9d9]">
            <svg viewBox="0 0 20 14" className="h-[5px] w-[7px]">
              <path d="M0 0H20L10 14Z" fill="#666" />
            </svg>
          </span>
        </div>
        <svg viewBox="0 0 24 24" className="ml-[8px] h-[8px] w-[8px]">
          <path d="M12 0V24M0 12H24" stroke="#1b5295" strokeWidth="6" />
        </svg>
        <T w={44.500} className="ml-[1.200px] text-[8.300px] text-[#265a97]">Add Custom</T>
      </div>
      <div className="mt-[11.500px] flex pl-[17px]">
        <Tick className="h-[10px] w-[10px]" />
        <div className="ml-[7.300px] flex flex-col items-start">
          <T w={210}>Use this selection by default when exporting point data and</T>
          <T w={90}>dont' show me this again.</T>
        </div>
      </div>
      <div className="mt-[6px] flex gap-[10.300px] pl-[172.300px]">
        <div className="flex h-[20.700px] w-[39.400px] items-center justify-center border border-[#777] bg-[#37761d] text-[8.500px] text-white">
          <T w={10.500} className="font-bold">Ok</T>
        </div>
        <div className="flex h-[20.700px] w-[39px] items-center justify-center border border-[#777] bg-white text-[8.300px]">
          <T w={24}>Cancel</T>
        </div>
      </div>
    </div>
  );
}

function CustomDialog({ placeholder, pw, italic, children }: { placeholder: string; pw: number; italic?: boolean; children: React.ReactNode }) {
  return (
    <div className={`absolute top-[104.700px] left-[203px] h-[182px] w-[263.300px] border border-[#eee] bg-white text-[8px] leading-[10px] text-[#222] ${HUMAN}`}>
      <div className="flex h-[20px] items-center justify-between pr-[5px] pl-[19px]">
        <T w={126} className="text-[9.800px]">Add Custom Spatial Reference</T>
        <svg viewBox="0 0 24 24" className="mt-[-3px] h-[7.500px] w-[7.500px]">
          <path d="M3 3L21 21M21 3L3 21" stroke="#555" strokeWidth="7" />
        </svg>
      </div>
      <div className="mt-[9.500px] ml-[19px] flex h-[15.800px] w-[228px] items-center justify-between border border-[#ddd] pr-[7px] pl-[4px]">
        <T w={pw} className={`text-[#c4c4c4] ${italic ? "italic" : ""}`}>{placeholder}</T>
        <Search className="h-[10px] w-[10px] text-[#1b5295]" strokeWidth={4} />
      </div>
      {children}
    </div>
  );
}

function BrowseDialog() {
  return (
    <CustomDialog placeholder="Search" pw={23}>
      <svg viewBox="0 0 88 75" className="mt-[16px] ml-[20.300px] block h-[25px] w-[29.500px]">
        <path d="M9 3H30Q36 3 38 9L39 13H76Q85 13 85 22V64Q85 72 76 72H11Q3 72 3 64V10Q3 3 9 3Z" fill="#fff" stroke="#c6c6c6" strokeWidth="5.500" />
      </svg>
      <div className="mt-[8px] pl-[19.300px]">
        <T w={41.500}>My Content</T>
      </div>
    </CustomDialog>
  );
}

function ResultsDialog() {
  const rows = [
    { row: "h-[33px]", btn: "mt-[8.500px]", text: "pt-[2px]" },
    { row: "h-[32.700px]", btn: "mt-[8.500px]", text: "pt-[3px]" },
    { row: "h-[30px]", btn: "mt-[6px]", text: "pt-[3px]" },
  ];
  return (
    <CustomDialog placeholder="Search My Content" pw={67} italic>
      <div className="mt-[7px] flex h-[10px] items-center justify-between pr-[13px] pl-[19px]">
        <T w={61} className="text-[8.300px]">{"All > My Content"}</T>
        <div className="flex items-center gap-[2px] text-[7px]">
          <svg viewBox="0 0 20 24" className="h-[6px] w-[5.500px]">
            <path d="M10 2L2 12L10 22M18 2L10 12L18 22" fill="none" stroke="#555" strokeWidth="3" />
          </svg>
          <T w={34} className="font-medium">Page 1 of 6</T>
          <svg viewBox="0 0 20 24" className="h-[6px] w-[5.500px]">
            <path d="M2 2L10 12L2 22M10 2L18 12L10 22" fill="none" stroke="#555" strokeWidth="3" />
          </svg>
        </div>
      </div>
      <div className="mt-[7.500px] pl-[19px]">
        {rows.map((r, i) => (
          <div key={i} className={`flex ${r.row}`}>
            <div className="h-[29px] w-[46px] bg-[#ececec]" />
            <div className={`ml-[3.300px] flex w-[142.700px] flex-col items-start leading-[9.500px] ${r.text}`}>
              <T w={41.500} className="text-[8.300px]">WorldsSoil1</T>
              <T w={33.500} className="text-[7px] text-[#c8c8c8]">Description</T>
              <T w={20} className="text-[7px] font-bold text-[#3a6aa3]">Details</T>
            </div>
            <div className={`flex h-[11.700px] w-[36px] items-center justify-center rounded-[1px] border border-[#777] text-[7px] text-[#333] ${r.btn}`}>
              <T w={18}>Select</T>
            </div>
          </div>
        ))}
      </div>
    </CustomDialog>
  );
}

/* -------------------------------------------------- configuration screen */

function ConfigScreen() {
  const menu: [string, number][] = [
    ["Info", 9.500], ["ArcGIS Maps", 30], ["New", 11], ["Open", 13], ["Save", 11],
    ["Save As", 18], ["Print", 11.500], ["Share", 13], ["Export", 15], ["Close", 13],
  ];
  const checks = [
    { t: "Check for updates", w: 42.500 },
    { t: "Fallback to cloud resources", w: 62.500 },
    { t: "Participate in the Esri User Experience Improvement program (requires restart)", w: 179.500 },
  ];
  return (
    <div className={`flex h-[395.500px] w-[590px] border-t border-r border-b border-[#4f9b72] border-t-[#9fd3b6] bg-white text-[6.200px] leading-[8px] text-[#4a4a4a] ${UI}`}>
      <div className="w-[54.600px] shrink-0 border-r border-[#4f9b72] bg-[#217346] pt-[8px] text-[#e6f3eb]">
        <svg viewBox="0 0 48 48" className="ml-[10.500px] block h-[16px] w-[16px]">
          <circle cx="24" cy="24" r="21.500" fill="none" stroke="#fff" strokeWidth="3.500" />
          <path d="M36 24H14M23 14L13 24L23 34" fill="none" stroke="#fff" strokeWidth="5" />
        </svg>
        <div className="mt-[6px]">
          {menu.map(([m, w]) => (
            <div key={m} className={`flex h-[16.750px] items-center pl-[12px] ${m === "ArcGIS Maps" ? "bg-[#439467]" : ""}`}>
              <T w={w}>{m}</T>
            </div>
          ))}
        </div>
        <div className="mx-[12px] mt-[5px] mb-[5px] h-px bg-[#3f8a60]" />
        <div className="flex h-[16.750px] items-center pl-[12px]">
          <T w={20.500}>Account</T>
        </div>
        <div className="flex h-[16.750px] items-center pl-[12px]">
          <T w={19}>Options</T>
        </div>
      </div>
      <div className="flex min-w-0 flex-1 flex-col">
        <div className="mt-[2px] flex h-[9px] items-center justify-end">
          <T w={53.500}>ESRIIOffices.xlsx - Excel</T>
          <div className="ml-[221px] flex w-[43.500px] items-center justify-between pr-[3px] text-[#555]">
            <span className="font-bold">?</span>
            <i className="mt-[3px] block h-px w-[4px] bg-[#666]" />
            <i className="block h-[4px] w-[5px] border border-t-2 border-[#666]" />
            <svg viewBox="0 0 12 12" className="h-[4.500px] w-[4.500px]">
              <path d="M1 1L11 11M11 1L1 11" stroke="#555" strokeWidth="2.500" />
            </svg>
          </div>
        </div>
        <div className="mt-px flex h-[12px] items-center justify-end gap-[3px] pr-[4.500px]">
          <T w={34.500}>Wilbur Hughes</T>
          <svg viewBox="0 0 8 6" className="h-[2px] w-[3px]">
            <path d="M0 0H8L4 6Z" fill="#777" />
          </svg>
          <svg viewBox="0 0 33 33" className="h-[11px] w-[11px]">
            <rect width="33" height="33" fill="#16222c" />
            <path d="M14 6L21 9L23 18L19 27L14 20Z" fill="#5d7078" />
          </svg>
        </div>
        <div className="mt-[1.500px] flex h-[24px] items-center pl-[18.500px] text-[18px] font-light text-[#4a4a4a]">
          <T w={197}>ArcGIS Maps Configuration</T>
        </div>
        <div className="mt-[5.200px] flex h-[9.500px] items-center pl-[20.200px]">
          <T w={84}>ArcGIS Connection (requires restart):</T>
          <div className="ml-[4.500px] flex h-[9.500px] w-[410.500px] items-center border border-[#bbb] pl-[2px] text-[#222]">
            <T w={54.500} className="font-medium">http://www.arcgis.com</T>
          </div>
        </div>
        <div className="pt-[1px]">
          {checks.map((c) => (
            <div key={c.t} className="flex h-[9.600px] items-center pl-[20.200px]">
              <i className="block size-[6px] shrink-0 border border-[#bbb]" />
              <T w={c.w} className="ml-[2px]">{c.t}</T>
            </div>
          ))}
        </div>
        <div className="flex h-[9px] items-center pt-[2px] pl-[20.200px]">
          <T w={86.500}>Current User: m4o (Esri Maps Admin)</T>
        </div>
        <div className="flex h-[8px] items-center pt-[1.500px] pl-[20.200px]">
          <T w={40}>Version: 4.1.0.397</T>
        </div>
        <div className={`mt-[6.500px] flex h-[8px] items-center pl-[20.700px] text-[#333] ${HUMAN}`}>
          <Tick className="h-[7px] w-[7px]" />
          <T w={151}>Use this Spatial Reference by default when exporting point data:</T>
          <T w={30} className="ml-[8px] text-[#aaa]">World Soils1</T>
        </div>
        <div className={`mt-[40.500px] ml-[156.500px] flex h-[19.500px] w-[83px] items-center justify-between border border-[#858585] bg-[#999] pr-[4px] pl-[8px] text-white ${HUMAN}`}>
          <T w={51}>Finished. Back to Top</T>
          <svg viewBox="0 0 30 30" className="h-[9.500px] w-[9.500px]">
            <circle cx="15" cy="15" r="12.500" fill="none" stroke="#fff" strokeWidth="4" />
            <path d="M15 24V9M9 14L15 8L21 14" fill="none" stroke="#fff" strokeWidth="3.500" />
          </svg>
        </div>
      </div>
    </div>
  );
}

function Step({ title, w, head, className = "", children }: { title: string; w: number; head: string; className?: string; children: React.ReactNode }) {
  return (
    <section className={`flex w-[590px] shrink-0 flex-col ${className}`}>
      <h2 className={`flex shrink-0 items-center text-[#111] ${HUMAN} ${head}`}>
        <T w={w}>{title}</T>
      </h2>
      {children}
    </section>
  );
}

export default function App() {
  return (
    <main className="flex h-[1020px] w-[1920px] flex-col overflow-hidden bg-white pt-[84px] pl-[38px]">
      <div className="flex h-[435px] shrink-0 items-start">
        <Step title="4. Export layer to worksheet" w={197} head="relative z-10 h-[21px] pt-[4px] text-[15px]">
          <MapWindow id="m4" next="left-[250px] top-[341px]">
            <ContextMenu />
            <div className="absolute top-[196px] left-[288.700px] z-20">
              <Cursor />
            </div>
          </MapWindow>
        </Step>
        <Step title="5. User can also add a custom spatial reference." w={279} head="h-[25px] pb-[2px] text-[13.300px]" className="ml-[37px]">
          <MapWindow id="m5" next="left-[264px] top-[343.500px]" height="h-[377px]">
            <ExportDialog value="Enter Or Select" vw={54} />
            <div className="absolute top-[245px] left-[452.300px] z-20">
              <Cursor />
            </div>
          </MapWindow>
        </Step>
        <Step title="6. Dialogue opens to allow for the user to browse for custom spatial reference." w={460} head="h-[25px] pb-[2px] text-[13.300px]" className="ml-[43px]">
          <MapWindow id="m6" next="left-[264px] top-[342px]">
            <BrowseDialog />
            <div className="absolute top-[206.500px] left-[238px] z-20">
              <Cursor />
            </div>
          </MapWindow>
        </Step>
      </div>
      <div className="flex shrink-0 items-start">
        <Step title="7. Note: resuse dialogue already in EM40 for adding custom spatial reference." w={457} head="h-[27px] text-[13.300px]">
          <MapWindow id="m7" next="left-[264px] top-[343px]" height="h-[377px]">
            <ResultsDialog />
            <div className="absolute top-[122px] left-[459.300px] z-20">
              <Cursor />
            </div>
          </MapWindow>
        </Step>
        <Step title={'8. When checkbox is selected upon click "Ok", the user will not see the dialogue appear any more for exporting point data.'} w={580} head="h-[27px] pb-[4px] text-[11px]" className="ml-[37px]">
          <MapWindow id="m8" next="left-[250px] top-[342px]">
            <ExportDialog value="World soils1" vw={43} />
            <div className="absolute top-[299px] left-[427.500px] z-20">
              <Cursor />
            </div>
          </MapWindow>
        </Step>
        <Step title="9. User can manage spatial reference here or turn off default selection. Turning it off will result in the dialogue appearing." w={568} head="h-[19.500px] pt-[4px] text-[11px]" className="ml-[43px]">
          <ConfigScreen />
        </Step>
      </div>
    </main>
  );
}
